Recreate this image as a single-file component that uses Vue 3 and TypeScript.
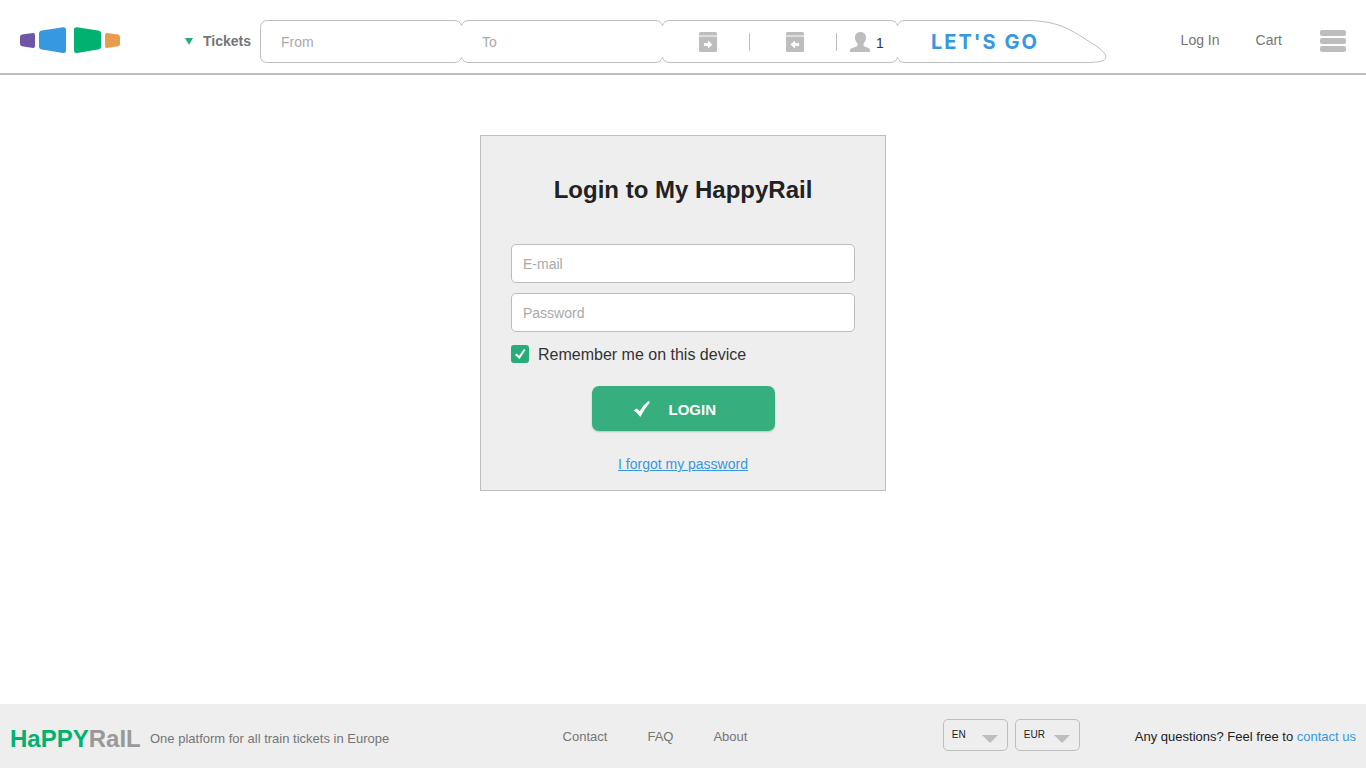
<script setup lang="ts">
import { ref } from 'vue'

const from = ref('')
const to = ref('')
const email = ref('')
const password = ref('')
const remember = ref(true)
const passengers = ref(1)
const language = ref('EN')
const currency = ref('EUR')

const footerLinks = ['Contact', 'FAQ', 'About']
</script>

<template>
  <div class="page">
    <header class="header">
      <a class="logo" href="#" aria-label="HappyRail home">
        <svg width="100" height="27" viewBox="0 0 100 27">
          <path fill="#6f55a5" d="M2 7.6 L13 6 Q15 5.8 15 8 V19 Q15 21.2 13 21 L2 19.300 Q0 19 0 17 V10 Q0 8 2 7.600Z" />
          <path fill="#3598e0" d="M22 3.600 L43 .3 Q46 0 46 3 V23.500 Q46 26.400 43 26 L22 22.500 Q19 22 19 19.500 V6.500 Q19 4 22 3.600Z" />
          <path fill="#00b170" d="M57 .3 L78 3.600 Q81 4 81 6.500 V19.500 Q81 22 78 22.500 L57 26 Q54 26.400 54 23.500 V3 Q54 0 57 .3Z" />
          <path fill="#e99b50" d="M87 6 L98 7.600 Q100 8 100 10 V17 Q100 19 98 19.300 L87 21 Q85 21.200 85 19 V8 Q85 5.800 87 6Z" />
        </svg>
      </a>

      <button class="tickets" type="button">
        <svg width="8" height="7" viewBox="0 0 8 7"><path fill="#27ae78" d="M0 0H8L4 7Z" /></svg>
        Tickets
      </button>

      <form class="search" @submit.prevent>
        <svg class="search-outline" width="847" height="43" viewBox="0 0 847 43" fill="none" stroke="#bdbdbd">
          <path
            d="M7.500 .5 H194 Q200 .5 201.500 5.500 Q203 .5 209 .5 H395 Q401 .5 402.500 5.500 Q404 .5 410 .5 H630 Q636 .5 637.500 5.500 Q639 .5 645 .5 H766 C784 .5 796 3.500 806 8 C818 13.500 827 20.500 837 26.500 C843 31 845.800 34 845.800 37 C845.800 41.500 839 42.500 823 42.500 H645 Q639 42.500 637.500 37.500 Q636 42.500 630 42.500 H410 Q404 42.500 402.500 37.500 Q401 42.500 395 42.500 H209 Q203 42.500 201.500 37.500 Q200 42.500 194 42.500 H7.500 Q.5 42.500 .5 35.500 V7.500 Q.5 .5 7.500 .5Z"
          />
        </svg>
        <input v-model="from" class="station" type="text" placeholder="From" aria-label="From" />
        <input v-model="to" class="station" type="text" placeholder="To" aria-label="To" />
        <div class="options">
          <button class="date" type="button" aria-label="Outbound date">
            <svg width="18" height="20" viewBox="0 0 18 20">
              <path fill="#bdbdbd" d="M1.500 0H16.500Q18 0 18 1.500V3H0V1.500Q0 0 1.500 0Z" />
              <path fill="#dedede" d="M0 3H18V5H0Z" />
              <path fill="#bdbdbd" d="M0 5H18V18.500Q18 20 16.500 20H1.500Q0 20 0 18.500Z" />
              <path fill="#fff" d="M5 11H9V8.500L13.500 12.500L9 16.500V14H5Z" />
            </svg>
          </button>
          <button class="date" type="button" aria-label="Return date">
            <svg width="18" height="20" viewBox="0 0 18 20">
              <path fill="#bdbdbd" d="M1.500 0H16.500Q18 0 18 1.500V3H0V1.500Q0 0 1.500 0Z" />
              <path fill="#dedede" d="M0 3H18V5H0Z" />
              <path fill="#bdbdbd" d="M0 5H18V18.500Q18 20 16.500 20H1.500Q0 20 0 18.500Z" />
              <path fill="#fff" d="M13 11H9V8.500L4.500 12.500L9 16.500V14H13Z" />
            </svg>
          </button>
          <button class="passengers" type="button" aria-label="Passengers">
            <svg width="20" height="20" viewBox="0 0 20 20">
              <path
                fill="#bdbdbd"
                d="M10.500 0C14 0 16 2.300 16 5.500C16 8 15 9.500 14 11C13 12.500 13.300 14 15 14.800C17.500 15.900 20 16 20 18.500V20H0V18.500C0 16 3.500 15.900 6 14.800C7.800 14 8 12.500 7 11C6 9.500 5 8 5 5.500C5 2.300 7 0 10.500 0Z"
              />
            </svg>
            <span>{{ passengers }}</span>
          </button>
        </div>
        <button class="go" type="submit">LET'S GO</button>
      </form>

      <nav class="account">
        <a href="#">Log In</a>
        <a href="#">Cart</a>
        <button class="menu" type="button" aria-label="Menu">
          <span></span>
          <span></span>
          <span></span>
        </button>
      </nav>
    </header>

    <main class="main">
      <form class="card" @submit.prevent>
        <h1>Login to My HappyRail</h1>
        <input v-model="email" class="field" type="email" placeholder="E-mail" aria-label="E-mail" />
        <input v-model="password" class="field" type="password" placeholder="Password" aria-label="Password" />
        <label class="remember">
          <span class="box">
            <input v-model="remember" type="checkbox" />
            <svg v-if="remember" width="18" height="18" viewBox="0 0 18 18">
              <path fill="#fff" d="M4 10L5.500 8.500L8.200 10.800L13 4L14.500 5L8.500 14Z" />
            </svg>
          </span>
          <span>Remember me on this device</span>
        </label>
        <button class="login" type="submit">
          <svg width="16" height="16" viewBox="0 0 16 16">
            <path fill="#fff" d="M0 9.500L2.500 7.500Q4.500 8.500 5.700 10.300Q9 4 14.500 0L16 1.200Q10.500 7.500 6.300 16Q3.800 12 0 9.500Z" />
          </svg>
          LOGIN
        </button>
        <a class="forgot" href="#">I forgot my password</a>
      </form>
    </main>

    <footer class="footer">
      <div class="brand">
        <span class="wordmark"><span class="happy">HaPPY</span><span class="rail">RaIL</span></span>
        <span>One platform for all train tickets in Europe</span>
      </div>
      <nav class="links">
        <a v-for="link in footerLinks" :key="link" href="#">{{ link }}</a>
      </nav>
      <div class="settings">
        <div class="picker">
          <select v-model="language" aria-label="Language">
            <option>EN</option>
            <option>DE</option>
          </select>
          <svg width="16" height="8" viewBox="0 0 16 8"><path fill="#bdbdbd" d="M0 0H16L8 8Z" /></svg>
        </div>
        <div class="picker">
          <select v-model="currency" aria-label="Currency">
            <option>EUR</option>
            <option>USD</option>
          </select>
          <svg width="16" height="8" viewBox="0 0 16 8"><path fill="#bdbdbd" d="M0 0H16L8 8Z" /></svg>
        </div>
        <p class="help">Any questions? Feel free to <a href="#">contact us</a></p>
      </div>
    </footer>
  </div>
</template>

<style>
body {
  margin: 0;
  background: #fff;
}
</style>

<style scoped>
.page {
  display: flex;
  flex-direction: column;
  min-height: 100vh;
  font-family: "Liberation Sans", Arial, sans-serif;
  font-size: 14px;
  color: #757575;
}

* {
  box-sizing: border-box;
}

a {
  color: inherit;
  text-decoration: none;
}

button,
input,
select {
  margin: 0;
  padding: 0;
  border: 0;
  background: none;
  font: inherit;
  color: inherit;
}

button {
  cursor: pointer;
}

svg {
  display: block;
}

input::placeholder {
  color: #a9a9a9;
  opacity: 1;
}

.header {
  display: flex;
  align-items: center;
  padding: 20px 20px 10px;
  border-bottom: 2px solid #bdbdbd;
}

.logo {
  padding-bottom: 2px;
}

.tickets {
  display: flex;
  align-items: center;
  gap: 10px;
  margin: 0 9px 0 65px;
  padding-bottom: 2px;
  font-weight: bold;
}

.tickets svg {
  margin-top: 2px;
}

.search {
  position: relative;
  display: flex;
  height: 43px;
}

.search-outline {
  position: absolute;
  inset: 0;
  pointer-events: none;
}

.station {
  width: 201px;
  padding: 0 21px;
  outline: none;
}

.options {
  display: flex;
  align-items: center;
  width: 235px;
}

.date {
  display: flex;
  justify-content: center;
  align-items: center;
  width: 87px;
  height: 18px;
  padding-left: 4px;
  border-right: 1px solid #bdbdbd;
}

.date:first-child {
  width: 88px;
}

.passengers {
  display: flex;
  align-items: center;
  gap: 6px;
  padding-left: 13px;
  color: #333;
}

.passengers span {
  padding-top: 2px;
}

.go {
  padding: 0 68px 0 34px;
  font-family: Inter, sans-serif;
  font-size: 20px;
  font-weight: 700;
  letter-spacing: 2px;
  color: #3598e0;
}

.account {
  display: flex;
  align-items: center;
  gap: 36px;
  margin-left: auto;
}

.account a {
  padding-bottom: 3px;
}

.menu {
  display: grid;
  gap: 2px;
  width: 26px;
  margin-left: 2px;
  padding-bottom: 2px;
}

.menu span {
  height: 6px;
  border-radius: 2px;
  background: #bdbdbd;
}

.main {
  flex: 1;
  display: flex;
  justify-content: center;
  align-items: flex-start;
  padding: 60px 20px;
}

.card {
  display: flex;
  flex-direction: column;
  width: 100%;
  max-width: 406px;
  padding: 40px 30px 17px;
  border: 1px solid #bdbdbd;
  background: #eee;
}

h1 {
  margin: 0 0 40px;
  font-size: 24px;
  line-height: 28px;
  text-align: center;
  color: #222;
}

.field {
  height: 39px;
  margin-bottom: 10px;
  padding: 0 11px;
  border: 1px solid #bdbdbd;
  border-radius: 5px;
  background: #fff;
}

.remember {
  display: flex;
  align-items: center;
  gap: 9px;
  height: 18px;
  margin-top: 3px;
  font-size: 16px;
  line-height: 18px;
  color: #333;
}

.remember > span:last-child {
  padding-top: 2px;
}

.box {
  position: relative;
  width: 18px;
  height: 18px;
}

.box input {
  display: block;
  width: 18px;
  height: 18px;
  border-radius: 3px;
  background: #27ae78;
  appearance: none;
}

.box svg {
  position: absolute;
  inset: 0;
  pointer-events: none;
}

.login {
  display: flex;
  align-items: center;
  align-self: center;
  gap: 19px;
  width: 183px;
  height: 45px;
  margin: 23px 0 24px;
  padding: 1px 42px 0;
  border-radius: 7px;
  background: #36ae7d;
  box-shadow: 0 1px 2px rgba(0, 0, 0, 0.2);
  font-size: 15px;
  font-weight: bold;
  color: #fff;
}

.forgot {
  align-self: center;
  line-height: 18px;
  text-decoration: underline;
  color: #3598e0;
}

.footer {
  display: flex;
  justify-content: space-between;
  align-items: center;
  min-height: 64px;
  padding: 0 10px;
  background: #eee;
  font-size: 13px;
}

.brand {
  display: flex;
  align-items: center;
  gap: 10px;
  padding-top: 4px;
}

.wordmark {
  width: 130px;
  padding-top: 2px;
  font-size: 24px;
  font-weight: bold;
  line-height: 28px;
}

.happy {
  color: #00b170;
}

.rail {
  color: #999;
}

.links {
  display: flex;
  gap: 40px;
  margin-right: 22px;
}

.settings {
  display: flex;
  align-items: center;
  gap: 7px;
  color: #222;
}

.picker {
  position: relative;
  padding-bottom: 2px;
}

.picker select {
  display: block;
  width: 65px;
  height: 32px;
  padding: 0 8px 2px;
  border: 1px solid #bdbdbd;
  border-radius: 5px;
  font-size: 10px;
  appearance: none;
}

.picker svg {
  position: absolute;
  top: 16px;
  right: 10px;
  pointer-events: none;
}

.help {
  margin: 0 0 0 48px;
}

.help a {
  color: #3598e0;
}
</style>
